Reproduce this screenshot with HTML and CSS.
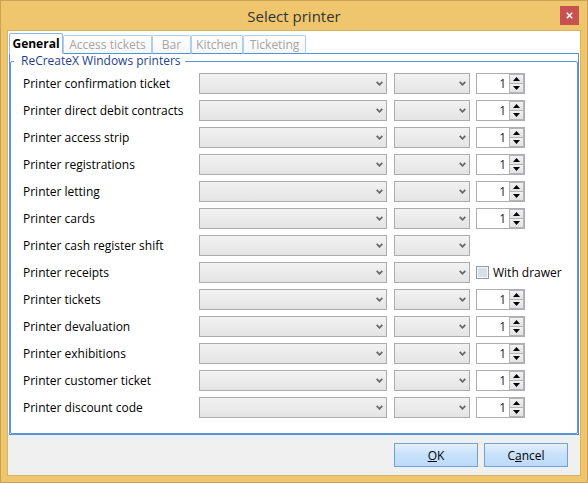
FILE: index.html
```html
<!DOCTYPE html>
<html>
<head>
<meta charset="utf-8">
<title>Select printer</title>
<link rel="stylesheet" href="styles.css">
</head>
<body>
<div class="window">
  <div class="titlebar">
    <span></span>
    <div class="title">Select printer</div>
    <div class="close"><svg width="7" height="7" viewBox="0 0 7 7"><path d="M0.8 0.8 L6.2 6.2 M6.2 0.8 L0.8 6.2" stroke="#fff" stroke-width="1.6" fill="none"/></svg></div>
  </div>
  <div class="client">
    <div class="tabctl">
      <div class="tabstrip">
        <div class="tab active t1">General</div>
        <div class="tab t2">Access tickets</div>
        <div class="tab t3">Bar</div>
        <div class="tab t4">Kitchen</div>
        <div class="tab t5">Ticketing</div>
      </div>
      <div class="panel">
        <fieldset class="group">
          <legend>ReCreateX Windows printers</legend>
          <div class="rows">
            <div class="row"><span class="label">Printer confirmation ticket</span>
              <div class="combo wide"><svg class="chev" width="7" height="5" viewBox="0 0 7 5"><path d="M0.7 0.8 L3.5 3.8 L6.3 0.8" stroke="#666" stroke-width="1.7" fill="none"/></svg></div>
              <div class="combo narrow"><svg class="chev" width="7" height="5" viewBox="0 0 7 5"><path d="M0.7 0.8 L3.5 3.8 L6.3 0.8" stroke="#666" stroke-width="1.7" fill="none"/></svg></div>
              <div class="spin"><span class="val">1</span><div class="sbtns"><div class="sbtn up"><svg width="7" height="4" viewBox="0 0 7 4"><path d="M0 4 L3.5 0 L7 4Z" fill="#000"/></svg></div><div class="sbtn down"><svg width="7" height="4" viewBox="0 0 7 4"><path d="M0 0 L3.5 4 L7 0Z" fill="#000"/></svg></div></div></div>
            </div>
            <div class="row"><span class="label">Printer direct debit contracts</span>
              <div class="combo wide"><svg class="chev" width="7" height="5" viewBox="0 0 7 5"><path d="M0.7 0.8 L3.5 3.8 L6.3 0.8" stroke="#666" stroke-width="1.7" fill="none"/></svg></div>
              <div class="combo narrow"><svg class="chev" width="7" height="5" viewBox="0 0 7 5"><path d="M0.7 0.8 L3.5 3.8 L6.3 0.8" stroke="#666" stroke-width="1.7" fill="none"/></svg></div>
              <div class="spin"><span class="val">1</span><div class="sbtns"><div class="sbtn up"><svg width="7" height="4" viewBox="0 0 7 4"><path d="M0 4 L3.5 0 L7 4Z" fill="#000"/></svg></div><div class="sbtn down"><svg width="7" height="4" viewBox="0 0 7 4"><path d="M0 0 L3.5 4 L7 0Z" fill="#000"/></svg></div></div></div>
            </div>
            <div class="row"><span class="label">Printer access strip</span>
              <div class="combo wide"><svg class="chev" width="7" height="5" viewBox="0 0 7 5"><path d="M0.7 0.8 L3.5 3.8 L6.3 0.8" stroke="#666" stroke-width="1.7" fill="none"/></svg></div>
              <div class="combo narrow"><svg class="chev" width="7" height="5" viewBox="0 0 7 5"><path d="M0.7 0.8 L3.5 3.8 L6.3 0.8" stroke="#666" stroke-width="1.7" fill="none"/></svg></div>
              <div class="spin"><span class="val">1</span><div class="sbtns"><div class="sbtn up"><svg width="7" height="4" viewBox="0 0 7 4"><path d="M0 4 L3.5 0 L7 4Z" fill="#000"/></svg></div><div class="sbtn down"><svg width="7" height="4" viewBox="0 0 7 4"><path d="M0 0 L3.5 4 L7 0Z" fill="#000"/></svg></div></div></div>
            </div>
            <div class="row"><span class="label">Printer registrations</span>
              <div class="combo wide"><svg class="chev" width="7" height="5" viewBox="0 0 7 5"><path d="M0.7 0.8 L3.5 3.8 L6.3 0.8" stroke="#666" stroke-width="1.7" fill="none"/></svg></div>
              <div class="combo narrow"><svg class="chev" width="7" height="5" viewBox="0 0 7 5"><path d="M0.7 0.8 L3.5 3.8 L6.3 0.8" stroke="#666" stroke-width="1.7" fill="none"/></svg></div>
              <div class="spin"><span class="val">1</span><div class="sbtns"><div class="sbtn up"><svg width="7" height="4" viewBox="0 0 7 4"><path d="M0 4 L3.5 0 L7 4Z" fill="#000"/></svg></div><div class="sbtn down"><svg width="7" height="4" viewBox="0 0 7 4"><path d="M0 0 L3.5 4 L7 0Z" fill="#000"/></svg></div></div></div>
            </div>
            <div class="row"><span class="label">Printer letting</span>
              <div class="combo wide"><svg class="chev" width="7" height="5" viewBox="0 0 7 5"><path d="M0.7 0.8 L3.5 3.8 L6.3 0.8" stroke="#666" stroke-width="1.7" fill="none"/></svg></div>
              <div class="combo narrow"><svg class="chev" width="7" height="5" viewBox="0 0 7 5"><path d="M0.7 0.8 L3.5 3.8 L6.3 0.8" stroke="#666" stroke-width="1.7" fill="none"/></svg></div>
              <div class="spin"><span class="val">1</span><div class="sbtns"><div class="sbtn up"><svg width="7" height="4" viewBox="0 0 7 4"><path d="M0 4 L3.5 0 L7 4Z" fill="#000"/></svg></div><div class="sbtn down"><svg width="7" height="4" viewBox="0 0 7 4"><path d="M0 0 L3.5 4 L7 0Z" fill="#000"/></svg></div></div></div>
            </div>
            <div class="row"><span class="label">Printer cards</span>
              <div class="combo wide"><svg class="chev" width="7" height="5" viewBox="0 0 7 5"><path d="M0.7 0.8 L3.5 3.8 L6.3 0.8" stroke="#666" stroke-width="1.7" fill="none"/></svg></div>
              <div class="combo narrow"><svg class="chev" width="7" height="5" viewBox="0 0 7 5"><path d="M0.7 0.8 L3.5 3.8 L6.3 0.8" stroke="#666" stroke-width="1.7" fill="none"/></svg></div>
              <div class="spin"><span class="val">1</span><div class="sbtns"><div class="sbtn up"><svg width="7" height="4" viewBox="0 0 7 4"><path d="M0 4 L3.5 0 L7 4Z" fill="#000"/></svg></div><div class="sbtn down"><svg width="7" height="4" viewBox="0 0 7 4"><path d="M0 0 L3.5 4 L7 0Z" fill="#000"/></svg></div></div></div>
            </div>
            <div class="row"><span class="label">Printer cash register shift</span>
              <div class="combo wide"><svg class="chev" width="7" height="5" viewBox="0 0 7 5"><path d="M0.7 0.8 L3.5 3.8 L6.3 0.8" stroke="#666" stroke-width="1.7" fill="none"/></svg></div>
              <div class="combo narrow"><svg class="chev" width="7" height="5" viewBox="0 0 7 5"><path d="M0.7 0.8 L3.5 3.8 L6.3 0.8" stroke="#666" stroke-width="1.7" fill="none"/></svg></div>
            </div>
            <div class="row"><span class="label">Printer receipts</span>
              <div class="combo wide"><svg class="chev" width="7" height="5" viewBox="0 0 7 5"><path d="M0.7 0.8 L3.5 3.8 L6.3 0.8" stroke="#666" stroke-width="1.7" fill="none"/></svg></div>
              <div class="combo narrow"><svg class="chev" width="7" height="5" viewBox="0 0 7 5"><path d="M0.7 0.8 L3.5 3.8 L6.3 0.8" stroke="#666" stroke-width="1.7" fill="none"/></svg></div>
              <label class="check"><span class="box"></span><span>With drawer</span></label>
            </div>
            <div class="row"><span class="label">Printer tickets</span>
              <div class="combo wide"><svg class="chev" width="7" height="5" viewBox="0 0 7 5"><path d="M0.7 0.8 L3.5 3.8 L6.3 0.8" stroke="#666" stroke-width="1.7" fill="none"/></svg></div>
              <div class="combo narrow"><svg class="chev" width="7" height="5" viewBox="0 0 7 5"><path d="M0.7 0.8 L3.5 3.8 L6.3 0.8" stroke="#666" stroke-width="1.7" fill="none"/></svg></div>
              <div class="spin"><span class="val">1</span><div class="sbtns"><div class="sbtn up"><svg width="7" height="4" viewBox="0 0 7 4"><path d="M0 4 L3.5 0 L7 4Z" fill="#000"/></svg></div><div class="sbtn down"><svg width="7" height="4" viewBox="0 0 7 4"><path d="M0 0 L3.5 4 L7 0Z" fill="#000"/></svg></div></div></div>
            </div>
            <div class="row"><span class="label">Printer devaluation</span>
              <div class="combo wide"><svg class="chev" width="7" height="5" viewBox="0 0 7 5"><path d="M0.7 0.8 L3.5 3.8 L6.3 0.8" stroke="#666" stroke-width="1.7" fill="none"/></svg></div>
              <div class="combo narrow"><svg class="chev" width="7" height="5" viewBox="0 0 7 5"><path d="M0.7 0.8 L3.5 3.8 L6.3 0.8" stroke="#666" stroke-width="1.7" fill="none"/></svg></div>
              <div class="spin"><span class="val">1</span><div class="sbtns"><div class="sbtn up"><svg width="7" height="4" viewBox="0 0 7 4"><path d="M0 4 L3.5 0 L7 4Z" fill="#000"/></svg></div><div class="sbtn down"><svg width="7" height="4" viewBox="0 0 7 4"><path d="M0 0 L3.5 4 L7 0Z" fill="#000"/></svg></div></div></div>
            </div>
            <div class="row"><span class="label">Printer exhibitions</span>
              <div class="combo wide"><svg class="chev" width="7" height="5" viewBox="0 0 7 5"><path d="M0.7 0.8 L3.5 3.8 L6.3 0.8" stroke="#666" stroke-width="1.7" fill="none"/></svg></div>
              <div class="combo narrow"><svg class="chev" width="7" height="5" viewBox="0 0 7 5"><path d="M0.7 0.8 L3.5 3.8 L6.3 0.8" stroke="#666" stroke-width="1.7" fill="none"/></svg></div>
              <div class="spin"><span class="val">1</span><div class="sbtns"><div class="sbtn up"><svg width="7" height="4" viewBox="0 0 7 4"><path d="M0 4 L3.5 0 L7 4Z" fill="#000"/></svg></div><div class="sbtn down"><svg width="7" height="4" viewBox="0 0 7 4"><path d="M0 0 L3.5 4 L7 0Z" fill="#000"/></svg></div></div></div>
            </div>
            <div class="row"><span class="label">Printer customer ticket</span>
              <div class="combo wide"><svg class="chev" width="7" height="5" viewBox="0 0 7 5"><path d="M0.7 0.8 L3.5 3.8 L6.3 0.8" stroke="#666" stroke-width="1.7" fill="none"/></svg></div>
              <div class="combo narrow"><svg class="chev" width="7" height="5" viewBox="0 0 7 5"><path d="M0.7 0.8 L3.5 3.8 L6.3 0.8" stroke="#666" stroke-width="1.7" fill="none"/></svg></div>
              <div class="spin"><span class="val">1</span><div class="sbtns"><div class="sbtn up"><svg width="7" height="4" viewBox="0 0 7 4"><path d="M0 4 L3.5 0 L7 4Z" fill="#000"/></svg></div><div class="sbtn down"><svg width="7" height="4" viewBox="0 0 7 4"><path d="M0 0 L3.5 4 L7 0Z" fill="#000"/></svg></div></div></div>
            </div>
            <div class="row"><span class="label">Printer discount code</span>
              <div class="combo wide"><svg class="chev" width="7" height="5" viewBox="0 0 7 5"><path d="M0.7 0.8 L3.5 3.8 L6.3 0.8" stroke="#666" stroke-width="1.7" fill="none"/></svg></div>
              <div class="combo narrow"><svg class="chev" width="7" height="5" viewBox="0 0 7 5"><path d="M0.7 0.8 L3.5 3.8 L6.3 0.8" stroke="#666" stroke-width="1.7" fill="none"/></svg></div>
              <div class="spin"><span class="val">1</span><div class="sbtns"><div class="sbtn up"><svg width="7" height="4" viewBox="0 0 7 4"><path d="M0 4 L3.5 0 L7 4Z" fill="#000"/></svg></div><div class="sbtn down"><svg width="7" height="4" viewBox="0 0 7 4"><path d="M0 0 L3.5 4 L7 0Z" fill="#000"/></svg></div></div></div>
            </div>
          </div>
        </fieldset>
      </div>
    </div>
    <div class="buttons">
      <button class="btn"><u>O</u>K</button>
      <button class="btn">C<u>a</u>ncel</button>
    </div>
  </div>
</div>
</body>
</html>
```

FILE: styles.css
```css
html, body {
  margin: 0;
  padding: 0;
  background: #fff;
}
body {
  font-family: "Open Sans", "Noto Sans", sans-serif;
  font-size: 12px;
  color: #000;
}
.window {
  width: 588px;
  height: 483px;
  box-sizing: border-box;
  border: 1px solid #C8A350;
  background: #EFC66E;
  display: flex;
  flex-direction: column;
}
.titlebar {
  height: 30px;
  flex: none;
  display: grid;
  grid-template-columns: 1fr auto 1fr;
  align-items: start;
}
.title {
  font-size: 15px;
  line-height: 30px;
  color: #333;
}
.close {
  justify-self: end;
  margin: 5px 8px 0 0;
  width: 19px;
  height: 19px;
  background: #C75050;
  display: flex;
  align-items: center;
  justify-content: center;
}
.client {
  margin: 0 7px 7px;
  flex: 1;
  background: #F0F0F0;
  outline: 1px solid #D8B35E;
  display: flex;
  flex-direction: column;
}
.tabctl {
  background: #fff;
}
.tabstrip {
  height: 23px;
  margin-bottom: -1px;
  padding-left: 1px;
  display: flex;
  align-items: flex-end;
}
.tab {
  box-sizing: border-box;
  height: 19px;
  border: 1px solid #AFCDEC;
  border-bottom-color: #4D94DF;
  border-radius: 2px 2px 0 0;
  background: linear-gradient(#FFFFFF, #F6F6F6);
  color: #A5A5A5;
  text-align: center;
  line-height: 17px;
  white-space: nowrap;
}
.tab.active {
  height: 21px;
  border-color: #92B6DC;
  border-bottom-color: #fff;
  background: #fff;
  color: #000;
  font-weight: bold;
  line-height: 19px;
  position: relative;
  z-index: 1;
}
.t1 { width: 54px; }
.t2 { width: 89px; }
.t3 { width: 39px; }
.t4 { width: 52px; }
.t5 { width: 63px; }
.panel {
  margin: 0 1px;
  height: 382px;
  box-sizing: border-box;
  border: 1px solid #4D94DF;
  background: #fff;
}
.group {
  margin: 0;
  padding: 5px 0 15px 0;
  border: 1px solid #5C97D8;
  border-radius: 2px;
  min-width: 0;
}
.group legend {
  margin-left: 3px;
  padding: 0 4px 0 7px;
  line-height: 14px;
  font-size: 12px;
  color: #1E3F8C;
}
.rows {
  display: flex;
  flex-direction: column;
  gap: 6px;
}
.row {
  display: flex;
  align-items: center;
  height: 21px;
  padding-left: 12px;
}
.label {
  width: 176px;
  flex: none;
  white-space: nowrap;
}
.combo {
  box-sizing: border-box;
  height: 21px;
  flex: none;
  border: 1px solid #ACACAC;
  background: linear-gradient(#F2F2F2, #E4E4E4);
  display: flex;
  align-items: center;
  justify-content: flex-end;
  padding-right: 3px;
}
.combo.wide { width: 188px; }
.combo.narrow { width: 76px; margin-left: 7px; }
.chev { display: block; }
.spin {
  box-sizing: border-box;
  margin-left: 6px;
  width: 49px;
  height: 21px;
  flex: none;
  border: 1px solid #ABADB3;
  background: #fff;
  display: flex;
}
.val {
  flex: 1;
  text-align: right;
  padding-right: 3px;
  line-height: 19px;
  color: #1E1438;
}
.sbtns {
  width: 15px;
  display: flex;
  flex-direction: column;
}
.sbtn {
  flex: 1;
  box-sizing: border-box;
  background: linear-gradient(#F2F2F2, #E2E2E2);
  border: 1px solid #B5B5B5;
  display: flex;
  align-items: center;
  justify-content: center;
}
.sbtn.down { border-top: none; }
.sbtn svg { display: block; }
.check {
  margin-left: 6px;
  display: flex;
  align-items: center;
  gap: 4px;
  white-space: nowrap;
}
.box {
  width: 13px;
  height: 13px;
  box-sizing: border-box;
  border: 1px solid #8F99AA;
  background: #D9DFE7;
  box-shadow: inset 0 0 0 1px #F5F7F9;
}
.buttons {
  display: flex;
  justify-content: flex-end;
  gap: 6px;
  padding: 8px 12px 0 0;
}
.btn {
  width: 84px;
  height: 24px;
  box-sizing: border-box;
  border: 1px solid #6FA2D9;
  background: linear-gradient(#E4F0FC, #C9E2FB 45%, #BBDAF9);
  font-family: "Open Sans", "Noto Sans", sans-serif;
  font-size: 12px;
  color: #000;
  padding: 0;
  margin: 0;
}
```
